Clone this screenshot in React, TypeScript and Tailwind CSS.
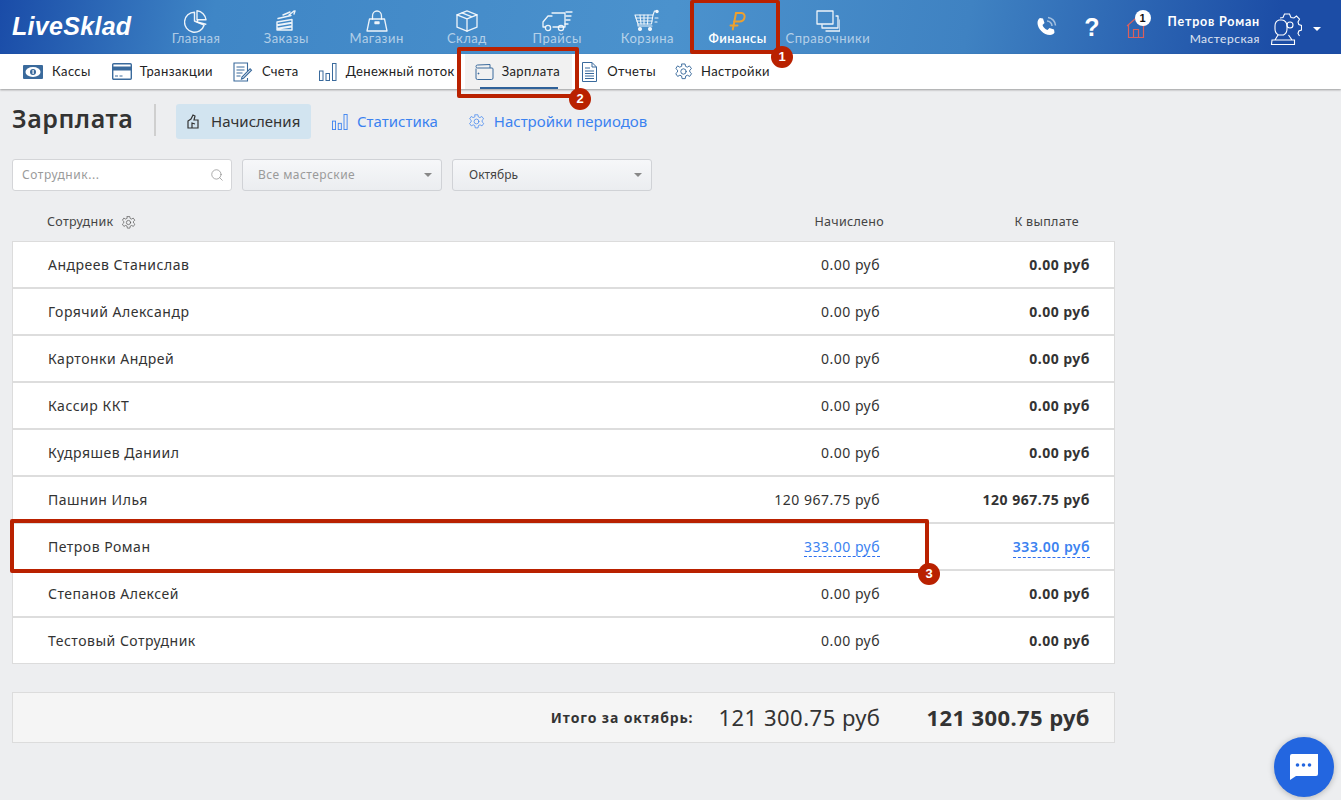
import React from "react";
import { Search } from "lucide-react";

const I = ({ s = 24, w, h, vb, c, sw = 1.4, children, className = "" }: any) => (
  <svg width={w ?? s} height={h ?? s} viewBox={vb ?? `0 0 ${s} ${s}`} fill="none" stroke={c ?? "currentColor"} strokeWidth={sw} strokeLinecap="round" strokeLinejoin="round" className={className}>
    {children}
  </svg>
);

const Gear = ({ s = 24, c, sw = 1.2 }: any) => (
  <I vb="0 0 24 24" w={s} h={s} c={c} sw={sw}>
    <path d="M10 2.500h4l.6 3 2.200 1 2.700-1.600 2.600 3.400-2.200 2 .1 2.400 2.200 2-2.400 3.500-2.800-1.500-2.200 1-.6 3.300h-4l-.6-3.300-2.200-1-2.800 1.500-2.400-3.500 2.200-2 .1-2.400-2.200-2L4.500 4.900l2.700 1.600 2.200-1z" />
    <circle cx="12" cy="12" r="3.400" />
  </I>
);

const navIcons: Record<string, React.ReactNode> = {
  "Главная": (
    <I s={24}><path d="M10.500 3.200a10 10 0 1 0 9.600 13L10.500 12z" /><path d="M13 1.800a10 10 0 0 1 9 9H13z" /><path d="M13 13l8.800 2.200M13.500 11v2" /></I>
  ),
  "Заказы": (
    <I s={24}><path d="M3 13l15-2.500v3L3 16zM3 16.500l15-2.500v3L3 19.500zM3 20l15-2.200V21H3z" /><path d="M4 9.500l13-3M9 6l7-3M15 6l5-4M20 5l1-3" /></I>
  ),
  "Магазин": (
    <I s={24} sw={1.3}><path d="M4.500 10h15l2.500 12H2z" /><path d="M7.500 10V7a4.500 5 0 0 1 9 0v3" /><path d="M10 13h4v1.500h-4z" /></I>
  ),
  "Склад": (
    <I s={24} sw={1.3}><path d="M12 1.800l10 4v12.400l-10 4-10-4V5.800z" /><path d="M2 5.800l10 4 10-4M12 9.800v12.400M7 3.800l10 4" /></I>
  ),
  "Прайсы": (
    <I vb="0 0 32 24" w={32} h={24} sw={1.3}><path d="M11 4h13v14H12" /><path d="M11 7H7l-5 6v5h2" /><circle cx="7" cy="19" r="2.600" /><circle cx="20" cy="19" r="2.600" /><path d="M25 3h6M25 7h5M25 11h4M24 15h3" /></I>
  ),
  "Корзина": (
    <I vb="0 0 26 24" w={26} h={24} sw={1.1}><path d="M1 6h18l-1.500 9H4z" /><path d="M6 6l1 9M10 6v9M14 6l-.5 9M2 9h16.500M3 12h15" /><path d="M19 6l1.500-4h2M4 15v2h14" /><circle cx="6" cy="20" r="1.500" fill="currentColor" /><circle cx="16" cy="20" r="1.500" fill="currentColor" /><circle cx="23" cy="2.500" r="1.200" fill="currentColor" /><path d="M21 9h3M21 13h2" /></I>
  ),
  "Справочники": (
    <I s={24} sw={1.3}><rect x="1" y="2" width="16" height="13" /><path d="M20 7h2v12H6v-3M24 11v11H10" /></I>
  ),
  "Финансы": (
    <svg width="18" height="20" viewBox="0 0 18 20" fill="none" stroke="#eda02f" strokeWidth="2" strokeLinecap="round" strokeLinejoin="round">
      <path d="M7 2h5.500a3.500 3.500 0 0 1 3 4.500C15 9 13 10.500 10.500 10.500H5" />
      <path d="M7 2 3.800 18.500M1.500 14.500h7" />
    </svg>
  ),
};

const NavItem = ({ label }: { label: string }) => (
  <div className="flex h-[54px] w-[90.25px] flex-col items-center pt-[9px]">
    <div className="flex h-[24px] items-center justify-center text-white/90">{navIcons[label]}</div>
    <span className={`mt-[-4px] whitespace-nowrap text-[13px] leading-[18px] tracking-[0.5px] ${label === "Финансы" ? "font-semibold text-white" : "text-white/60"}`}>{label}</span>
  </div>
);

const subIcon = "text-[#3a6a9c]";

const Cash = () => (
  <svg width="20" height="14" viewBox="0 0 20 14" className={subIcon}>
    <rect x="0" y="0" width="20" height="14" rx="1" fill="currentColor" />
    <ellipse cx="10" cy="7" rx="7.500" ry="5" fill="#fff" />
    <circle cx="10" cy="7" r="3" fill="currentColor" />
    <rect x="9.500" y="5" width="1.200" height="4" fill="#fff" />
  </svg>
);
const CardI = () => (
  <svg width="20" height="17" viewBox="0 0 20 17" fill="none" className={subIcon}>
    <rect x=".7" y=".7" width="18.600" height="15.600" rx="1" stroke="currentColor" strokeWidth="1.400" />
    <rect x="1" y="3.500" width="18" height="4" fill="currentColor" />
    <path d="M3 13h3M7.500 13h3" stroke="currentColor" />
  </svg>
);
const Bill = () => (
  <svg width="20" height="20" viewBox="0 0 20 20" fill="none" stroke="currentColor" strokeWidth="1.100" className={subIcon}>
    <path d="M14.500 9V1H1v18h13.500v-3" />
    <path d="M3.500 5h8M3.500 8h8M3.500 11h6M3.500 14h4" />
    <path d="M9 15l-.5 2 2-.8 8-8-1.400-1.400z" />
  </svg>
);
const Bars = ({ c = "text-[#3a6a9c]", w = 18, h = 18 }: any) => (
  <svg width={w} height={h} viewBox="0 0 18 18" fill="none" stroke="currentColor" strokeWidth="1" className={c}>
    <rect x=".5" y="8" width="3.500" height="9.500" />
    <rect x="7" y="10.500" width="3.500" height="7" />
    <rect x="13.500" y=".5" width="3.500" height="17" />
  </svg>
);
const Wallet = () => (
  <svg width="19" height="16" viewBox="0 0 19 16" fill="none" stroke="currentColor" strokeWidth="1" className={subIcon}>
    <path d="M1 4.500V14a1.500 1.500 0 0 0 1.500 1.500h14A1.500 1.500 0 0 0 18 14V5a1 1 0 0 0-1-1H2.500A1.500 1.500 0 0 1 1 2.500M1 2.500A1.500 1.500 0 0 1 2.500 1L15 .5V4" />
    <circle cx="3.500" cy="9.500" r=".5" fill="currentColor" />
  </svg>
);
const Doc = () => (
  <svg width="15" height="20" viewBox="0 0 15 20" fill="none" stroke="currentColor" strokeWidth="1" className={subIcon}>
    <path d="M.5.500h9.500l4.500 4.500v14.500H.5z" />
    <path d="M10 .5V5h4.500M3 6h5M3 9h9M3 11.500h9M3 14h9M3 16.500h9" />
  </svg>
);

const SubItem = ({ icon, label, iw, ml, active }: any) => (
  <div className={`relative flex h-[35px] items-center ${ml ?? ""} ${active ? "bg-[#f1f1f1] pl-[10px] pr-[12px]" : ""}`}>
    <span className={`flex shrink-0 items-center ${iw}`}>{icon}</span>
    <span className="whitespace-nowrap text-[13px] tracking-[0.4px] text-[#222]">{label}</span>
    {active && <span className="absolute bottom-0 left-[15px] h-[2px] w-[78px] bg-[#2f6199]" />}
  </div>
);

const rows = [
  ["Андреев Станислав", "0.00 руб"],
  ["Горячий Александр", "0.00 руб"],
  ["Картонки Андрей", "0.00 руб"],
  ["Кассир ККТ", "0.00 руб"],
  ["Кудряшев Даниил", "0.00 руб"],
  ["Пашнин Илья", "120 967.75 руб"],
  ["Петров Роман", "333.00 руб"],
  ["Степанов Алексей", "0.00 руб"],
  ["Тестовый Сотрудник", "0.00 руб"],
];

const Caret = ({ c = "border-t-[#888]" }: any) => (
  <span className={`block h-0 w-0 border-x-[4px] border-t-[4px] border-x-transparent ${c}`} />
);

const Badge = ({ n, cls }: any) => (
  <span className={`absolute flex h-[22px] w-[22px] items-center justify-center rounded-full bg-[#b92100] font-['Liberation_Sans',sans-serif] text-[13px] font-bold text-white ${cls}`}>{n}</span>
);

const Frame = ({ cls }: any) => <div className={`pointer-events-none absolute rounded-[2px] border-[4px] border-[#b92100] ${cls}`} />;

export default function App() {
  return (
    <div className="relative h-[800px] w-[1341px] overflow-hidden bg-[#edeef0] font-['Noto_Sans',sans-serif] text-[#333]">
      <header className="flex h-[54px] items-stretch bg-[linear-gradient(100deg,#1a4ca8_0%,#3f86c6_16%,#4b92cd_50%,#3f82c2_72%,#1c4da6_95%)] font-['Lato',sans-serif]">
        <div className="flex w-[151px] shrink-0 items-center pl-[12px]">
          <span className="font-['Liberation_Sans',sans-serif] text-[25px] font-bold italic tracking-[0.3px] text-white">LiveSklad</span>
        </div>
        <div className="flex">
          {["Главная", "Заказы", "Магазин", "Склад", "Прайсы", "Корзина", "Финансы", "Справочники"].map((l) => (
            <NavItem key={l} label={l} />
          ))}
        </div>
        <div className="ml-auto flex items-center">
          <svg width="24" height="24" viewBox="0 0 24 24" className="mr-[26px]">
            <path d="M6 3l3 .5 1.500 4.500-2 2c.8 2.400 2.500 4 5 5l2-2 4.500 1.500.5 3c-.5 1.500-2.500 2.500-4.500 2.500C9.500 20 3.500 13.500 3.500 8 3.500 5.500 4.500 4 6 3z" fill="#fff" />
            <path d="M13 6a5 5 0 0 1 5 5M14 2.500a8.500 8.500 0 0 1 7.500 8" stroke="#fff" strokeOpacity=".55" strokeWidth="1.500" fill="none" />
          </svg>
          <div className="mr-[26px] flex flex-col items-center font-['Liberation_Sans',sans-serif] text-[25px] font-bold leading-none text-white">?</div>
          <div className="relative mr-[18px] h-[54px] w-[24px]">
            <svg width="20" height="21" viewBox="0 0 20 21" fill="none" stroke="#d9605c" strokeWidth="1.200" className="absolute left-0 top-[17px]">
              <path d="M1 9L10 1l9 8M2.500 8v12.500h15V8M7.500 20.500v-8h5v8" />
            </svg>
            <span className="absolute left-[9px] top-[10px] flex h-[16px] w-[16px] items-center justify-center rounded-full bg-white font-['Liberation_Sans',sans-serif] text-[11px] font-bold text-[#111]">1</span>
          </div>
          <div className="mr-[10px] mt-[5px] flex flex-col items-end text-right">
            <span className="text-[12.500px] font-bold leading-[17px] tracking-[0.8px] text-white">Петров Роман</span>
            <span className="text-[12px] leading-[17px] tracking-[0.5px] text-white/85">Мастерская</span>
          </div>
          <svg width="32" height="34" viewBox="0 0 32 34" fill="none" stroke="#fff" strokeWidth="1.100" className="mr-[11px] mt-[3px]">
            <path d="M10 6l3-.5L14.500 2h5L21 5.500l3 .5 2.500-2 3 3-1.500 3 .8 2.500 2.700 1v4.500l-2.700 1-.8 2.500 1.500 2.500" />
            <circle cx="20" cy="13" r="3" />
            <path d="M9 8c-3 1-4 3-4 6v3c0 3 1.500 5 3.500 6h5c2-1 3.500-3 3.500-6v-3c0-3-2-6-5-6h-3z" />
            <path d="M8 23l-3 5h17l-3.500-5M1.500 32.500h23v-4.500H2z" />
          </svg>
          <span className="mr-[20px] mt-[3px]"><Caret c="border-t-white" /></span>
        </div>
      </header>

      <nav className="relative flex h-[35px] items-stretch bg-white pl-[23px] font-['Lato',sans-serif] shadow-[0_1px_2px_rgba(0,0,0,0.35)]">
        <SubItem icon={<Cash />} label="Кассы" iw="w-[29px]" />
        <SubItem icon={<CardI />} label="Транзакции" iw="w-[28px]" ml="ml-[21px]" />
        <SubItem icon={<Bill />} label="Счета" iw="w-[29px]" ml="ml-[20px]" />
        <SubItem icon={<Bars />} label="Денежный поток" iw="w-[27px]" ml="ml-[20px]" />
        <SubItem icon={<Wallet />} label="Зарплата" iw="w-[27px]" ml="ml-[10px]" active />
        <SubItem icon={<Doc />} label="Отчеты" iw="w-[25px]" ml="ml-[10px]" />
        <SubItem icon={<Gear s={19} c="#3a6a9c" />} label="Настройки" iw="w-[27px]" ml="ml-[18px]" />
      </nav>

      <main className="px-[12px]">
        <div className="flex h-[50px] items-start pt-[15px]">
          <h1 className="w-[142px] text-[25px] font-semibold leading-[28px] tracking-[0.55px] text-[#333]">Зарплата</h1>
          <div className="h-[32px] w-[2px] bg-[#cfcfcf]" />
          <div className="ml-[20px] flex h-[35px] w-[135px] items-center rounded-[3px] bg-[#d2e4f0] pl-[9px] text-[15px] text-[#333]">
            <svg width="16" height="16" viewBox="0 0 16 16" fill="none" stroke="#333" strokeWidth="1.200" className="mr-[10px]"><path d="M3 7l3-2 2-4 2 1-1 4h4v8H3zM7 14V9l3 1" /></svg>
            Начисления
          </div>
          <div className="ml-[21px] flex h-[35px] items-center text-[15px] text-[#3b82f0]">
            <Bars c="text-[#3b82f0] mr-[9px]" w={16} h={16} />Статистика
          </div>
          <div className="ml-[30px] flex h-[35px] items-center text-[15px] text-[#3b82f0]">
            <span className="mr-[9px] flex"><Gear s={17} c="#3b82f0" sw={1} /></span>Настройки периодов
          </div>
        </div>

        <div className="mt-[20px] flex h-[32px] gap-[10px] text-[12px]">
          <div className="flex w-[220px] items-center justify-between rounded-[3px] border border-[#d4d5d8] bg-white pl-[9px] pr-[7px] text-[#9a9a9a]">
            <span className="tracking-[0.55px]">Сотрудник...</span>
            <Search size={14} strokeWidth={1.2} className="text-[#888]" />
          </div>
          <div className="flex w-[200px] items-center justify-between rounded-[3px] border border-[#d0d2d6] bg-[linear-gradient(#f6f7f9,#ebedf0)] pl-[15px] pr-[9px] text-[#9a9a9a]">
            <span className="tracking-[0.45px]">Все мастерские</span><Caret />
          </div>
          <div className="flex w-[200px] items-center justify-between rounded-[3px] border border-[#d0d2d6] bg-[linear-gradient(#f6f7f9,#ebedf0)] pl-[16px] pr-[9px] text-[#444]">
            <span>Октябрь</span><Caret />
          </div>
        </div>

        <div className="flex h-[50px] w-[1103px] items-center pt-[12px] text-[12.500px] tracking-[0.3px] text-[#444]">
          <span className="ml-[35px]">Сотрудник</span>
          <span className="ml-[8px] flex"><Gear s={15} c="#555" sw={1.1} /></span>
          <span className="ml-auto text-right">Начислено</span>
          <span className="w-[231px] pr-[36px] text-right">К выплате</span>
        </div>

        <div className="w-[1103px] border border-[#dcdcdc] bg-white">
          {rows.map(([n, v], i) => {
            const hl = n === "Петров Роман";
            const last = i === rows.length - 1;
            return (
              <div key={n} className={`flex items-center text-[14px] tracking-[0.5px] ${last ? "h-[45px]" : "h-[47px] border-b-2 border-[#dddddd]"}`}>
                <span className="ml-[35px] text-[#333]">{n}</span>
                <span className="ml-auto">
                  <span className={hl ? "border-b border-dashed border-[#2d6ff0] text-[#3b82f0]" : "text-[#333]"}>{v}</span>
                </span>
                <span className="flex w-[234px] justify-end pr-[24px]">
                  <span className={hl ? "border-b border-dashed border-[#2d6ff0] font-semibold text-[#3b82f0]" : "font-bold text-[#333]"}>{v}</span>
                </span>
              </div>
            );
          })}
        </div>

        <div className="mt-[28px] flex h-[51px] w-[1103px] items-center border border-[#dcdcdc] bg-[#f5f5f5] text-[#333]">
          <span className="ml-auto text-[14px] font-bold tracking-[0.9px]">Итого за октябрь:</span>
          <span className="ml-[25px] text-[22px] tracking-[0.5px]">121 300.75 руб</span>
          <span className="ml-[46px] mr-[24px] text-[22px] font-bold tracking-[0.4px]">121 300.75 руб</span>
        </div>
      </main>

      <div className="absolute bottom-[3px] right-[7px] flex h-[60px] w-[60px] items-center justify-center rounded-full bg-[#2366e0] shadow-[0_1px_6px_rgba(0,0,0,0.25)]">
        <svg width="32" height="32" viewBox="0 0 32 32">
          <path d="M3 3.500a2 2 0 0 1 2-2h26a0 0 0 0 1 0 0v20a2 2 0 0 1-2 2H9l-6 4z" fill="#fff" transform="translate(-1 1.500)" />
          <circle cx="9.500" cy="14" r="1.800" fill="#2366e0" /><circle cx="15.500" cy="14" r="1.800" fill="#2366e0" /><circle cx="21.500" cy="14" r="1.800" fill="#2366e0" />
        </svg>
      </div>

      <Frame cls="left-[690px] top-0 h-[54px] w-[90px] border-t-[3px]" />
      <Badge n="1" cls="left-[771px] top-[46px]" />
      <Frame cls="left-[457px] top-[47px] h-[51px] w-[122px]" />
      <Badge n="2" cls="left-[569px] top-[88px]" />
      <Frame cls="left-[10px] top-[519px] h-[54px] w-[919px]" />
      <Badge n="3" cls="left-[918px] top-[563px]" />
    </div>
  );
}
